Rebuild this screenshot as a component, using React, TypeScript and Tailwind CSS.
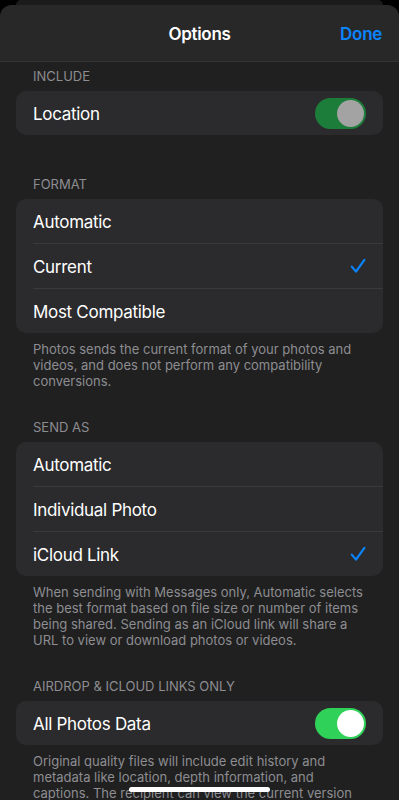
import React from 'react';

const font = { fontFamily: 'Inter, "Noto Sans", sans-serif' };

const Check = () => (
  <svg width="16" height="16" viewBox="0 0 16 16" fill="none" className="text-[#0a84ff]">
    <path d="M1.8 8.6 L6 13.6 L14.4 1.8" stroke="currentColor" strokeWidth="2.2" strokeLinecap="round" strokeLinejoin="round" />
  </svg>
);

const Toggle = ({ dim }: { dim?: boolean }) => (
  <div
    className={`w-[51px] h-[31px] rounded-full p-[2px] flex justify-end ${dim ? 'bg-[#1c7d3b]' : 'bg-[#30d158]'}`}
  >
    <div className={`w-[27px] h-[27px] rounded-full ${dim ? 'bg-[#a3a3a3]' : 'bg-white'}`} />
  </div>
);

const Label = ({ children }: { children: React.ReactNode }) => (
  <div className="px-[33px] text-[13px] leading-[18px] text-[#8d8d92] uppercase mb-[6px]">{children}</div>
);

const Footer = ({ children }: { children: React.ReactNode }) => (
  <div className="pl-[33px] pr-[33px] mt-[8px] text-[13px] leading-[16px] text-[#8d8d92]">{children}</div>
);

const Row = ({ text, right, last }: { text: string; right?: React.ReactNode; last?: boolean }) => (
  <div className="pl-[17px]">
    <div
      className={`flex items-center justify-between pr-[17px] ${last ? 'h-[44px]' : 'h-[45px] border-b border-[#3a3a3c]'}`}
    >
      <span className="pt-[3px] text-[17px] text-white tracking-[-0.3px]">{text}</span>
      {right}
    </div>
  </div>
);

const Card = ({ children }: { children: React.ReactNode }) => (
  <div className="mx-[16px] rounded-[10px] bg-[#2b2b2d] overflow-hidden">{children}</div>
);

export default function App() {
  return (
    <div className="relative h-[800px] w-[399px] bg-black overflow-hidden" style={font}>
      <div className="h-[5px] mx-[16px] bg-[#1b1b1b] rounded-t-[10px]" />
      <div className="h-[795px] rounded-t-[12px] bg-[#202020] overflow-hidden flex flex-col">
        <div className="h-[57px] shrink-0 pt-[4px] bg-[#282828] border-b border-[#333335] flex items-center justify-center relative">
          <span className="text-[17px] font-semibold text-white tracking-[-0.3px]">Options</span>
          <span className="absolute right-[17px] text-[17px] font-semibold text-[#0a84ff] tracking-[-0.3px]">Done</span>
        </div>
        <div className="pt-[5px]">
          <Label>Include</Label>
          <Card>
            <div className="h-[44px] flex items-center justify-between pl-[17px] pr-[17px]">
              <span className="pt-[3px] text-[17px] text-white tracking-[-0.3px]">Location</span>
              <Toggle dim />
            </div>
          </Card>

          <div className="mt-[40px]">
            <Label>Format</Label>
            <Card>
              <Row text="Automatic" />
              <Row text="Current" right={<Check />} />
              <Row text="Most Compatible" last />
            </Card>
            <Footer>
              Photos sends the current format of your photos and videos, and does not perform any compatibility conversions.
            </Footer>
          </div>

          <div className="mt-[29px]">
            <Label>Send As</Label>
            <Card>
              <Row text="Automatic" />
              <Row text="Individual Photo" />
              <Row text="iCloud Link" right={<Check />} last />
            </Card>
            <Footer>
              When sending with Messages only, Automatic selects the best format based on file size or number of items being shared. Sending as an iCloud link will share a URL to view or download photos or videos.
            </Footer>
          </div>

          <div className="mt-[29px]">
            <Label>AirDrop &amp; iCloud Links Only</Label>
            <Card>
              <div className="h-[44px] flex items-center justify-between pl-[17px] pr-[17px]">
                <span className="pt-[3px] text-[17px] text-white tracking-[-0.3px]">All Photos Data</span>
                <Toggle />
              </div>
            </Card>
            <Footer>
              Original quality files will include edit history and metadata like location, depth information, and captions. The recipient can view the current version or revert to the original.
            </Footer>
          </div>
        </div>
      </div>
      <div className="absolute left-[129px] top-[787px] w-[141px] h-[5px] rounded-full bg-white" />
    </div>
  );
}
